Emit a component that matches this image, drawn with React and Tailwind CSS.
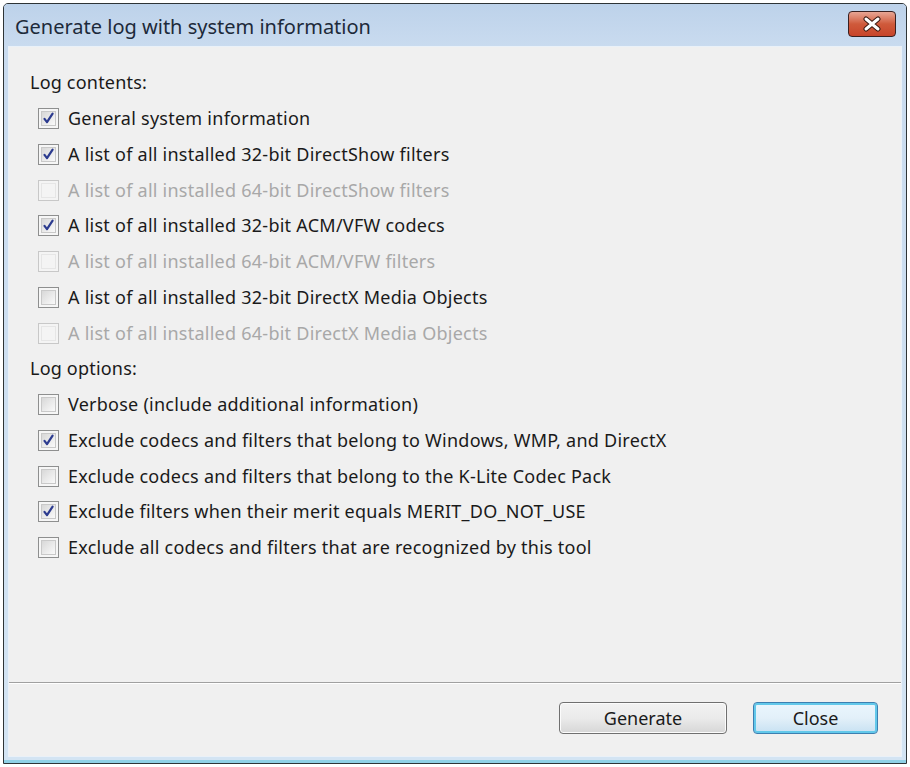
import React from "react";

const font = { fontFamily: '"Noto Sans", "Open Sans", sans-serif' };

function Check({ checked, disabled }) {
  return (
    <div
      className={
        "w-[21px] h-[21px] border flex items-center justify-center " +
        (disabled ? "border-[#c8c8c8] bg-[#f4f4f4]" : "border-[#8e8f8f] bg-[#f6f6f6]")
      }
    >
      <div
        className={
          "w-[15px] h-[15px] border flex items-center justify-center " +
          (disabled
            ? "border-[#e6e6e6] bg-[#f4f4f4]"
            : "border-[#c9c9c9] bg-gradient-to-br from-[#d8d8d8] to-[#fafafa]")
        }
      >
        {checked && (
          <svg width="13" height="13" viewBox="0 0 13 13">
            <path d="M2.5 6.8 L5 10.2 L10.6 1.6" fill="none" stroke="#2c3b8f" strokeWidth="2.2" strokeLinecap="round" strokeLinejoin="round" />
          </svg>
        )}
      </div>
    </div>
  );
}

function Row({ label, checked, disabled }) {
  return (
    <div className="h-[35.75px] flex items-center pl-[29px]">
      <Check checked={checked} disabled={disabled} />
      <span className={"ml-[9px] text-[18px] tracking-[0.25px] " + (disabled ? "text-[#a8a8a8]" : "text-[#1a1a1a]")}>{label}</span>
    </div>
  );
}

function Heading({ children }) {
  return (
    <div className="h-[35.75px] flex items-center pl-[21px] text-[18px] tracking-[0.2px] text-[#1a1a1a]">{children}</div>
  );
}

export default function App() {
  return (
    <div className="w-[910px] h-[767px] bg-white p-[3px]" style={font}>
      <div className="w-full h-full border-[1.5px] border-[#2e3436] rounded-t-[5px] flex flex-col bg-[#c4d7ec] overflow-hidden">
        <div className="h-[42px] flex items-center justify-between bg-gradient-to-b from-[#bdd2ea] to-[#c9dbef] pl-[11px] pr-[10px]">
          <span className="text-[20px] text-[#1d2a3a] tracking-[0px] mt-[3px]">Generate log with system information</span>
          <div className="w-[48px] h-[26px] rounded-[4px] border border-[#3a2020] bg-gradient-to-b from-[#e7a594] via-[#cf5a3b] to-[#c7442a] flex items-center justify-center mt-[-2px]">
            <svg width="22" height="16" viewBox="0 0 22 16">
              <path d="M5 3 L17 13 M17 3 L5 13" stroke="#3a1a12" strokeWidth="5" strokeLinecap="round" />
              <path d="M5 3 L17 13 M17 3 L5 13" stroke="#ffffff" strokeWidth="3" strokeLinecap="round" />
            </svg>
          </div>
        </div>
        <div className="flex-1 flex flex-col px-[4px] pb-[3px] bg-gradient-to-b from-[#c9dbef] to-[#d3e4f3] border-b-[3px] border-[#8fd1e6]">
          <div className="flex-1 flex flex-col bg-[#f0f0f0] border border-[#eaf1f8]">
            <div className="pt-[18px] flex flex-col">
              <Heading>Log contents:</Heading>
              <Row label="General system information" checked />
              <Row label="A list of all installed 32-bit DirectShow filters" checked />
              <Row label="A list of all installed 64-bit DirectShow filters" disabled />
              <Row label="A list of all installed 32-bit ACM/VFW codecs" checked />
              <Row label="A list of all installed 64-bit ACM/VFW filters" disabled />
              <Row label="A list of all installed 32-bit DirectX Media Objects" />
              <Row label="A list of all installed 64-bit DirectX Media Objects" disabled />
              <Heading>Log options:</Heading>
              <Row label="Verbose (include additional information)" />
              <Row label="Exclude codecs and filters that belong to Windows, WMP, and DirectX" checked />
              <Row label="Exclude codecs and filters that belong to the K-Lite Codec Pack" />
              <Row label="Exclude filters when their merit equals MERIT_DO_NOT_USE" checked />
              <Row label="Exclude all codecs and filters that are recognized by this tool" />
            </div>
            <div className="flex-1" />
            <div className="h-[2px] bg-[#a0a0a0] border-b border-white mx-0" />
            <div className="h-[72px] flex items-start justify-end pt-[18px] pr-[23px] gap-[26px]">
              <button className="w-[168px] h-[32px] rounded-[4px] border border-[#707070] bg-gradient-to-b from-[#f2f2f2] via-[#ebebeb] to-[#d6d6d6] text-[18px] text-[#1a1a1a] shadow-[inset_0_0_0_1px_#fcfcfc]" style={font}>
                Generate
              </button>
              <button className="w-[125px] h-[32px] rounded-[4px] border border-[#3c7fb1] bg-gradient-to-b from-[#eaf6fd] via-[#e3f0f9] to-[#c7e1f2] text-[18px] text-[#1a1a1a] shadow-[inset_0_0_0_2px_#62c8ea]" style={font}>
                Close
              </button>
            </div>
          </div>
        </div>
      </div>
    </div>
  );
}
